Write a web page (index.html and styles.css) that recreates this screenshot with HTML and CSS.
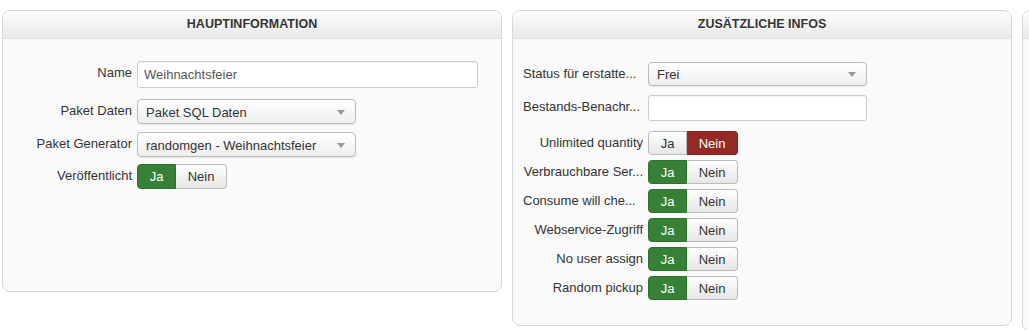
FILE: index.html
```html
<!DOCTYPE html>
<html lang="de">
<head>
    <meta charset="UTF-8">
    <meta name="viewport" content="width=device-width, initial-scale=1.0">
    <title>Paket bearbeiten</title>
    <link rel="stylesheet" href="styles.css">
</head>
<body>
    <div class="panels">
        <!-- Hauptinformation -->
        <div class="panel panel-main">
            <div class="panel-head">Hauptinformation</div>
            <div class="panel-body pb-main">
                <div class="row r-name">
                    <label>Name</label>
                    <input type="text" class="text wide" value="Weihnachtsfeier">
                </div>
                <div class="row r-sel1">
                    <label>Paket Daten</label>
                    <div class="select">Paket SQL Daten</div>
                </div>
                <div class="row r-sel2">
                    <label>Paket Generator</label>
                    <div class="select">randomgen - Weihnachtsfeier</div>
                </div>
                <div class="row r-tog">
                    <label>Veröffentlicht</label>
                    <div class="yesno">
                        <span class="btn yes active">Ja</span><span class="btn no">Nein</span>
                    </div>
                </div>
            </div>
        </div>

        <!-- Zusätzliche Infos -->
        <div class="panel">
            <div class="panel-head">Zusätzliche Infos</div>
            <div class="panel-body pb-extra">
                <div class="row r-status">
                    <label class="left" title="Status für erstattete Pakete">Status für erstatte...</label>
                    <div class="select short">Frei</div>
                </div>
                <div class="row r-stock">
                    <label class="left" title="Bestands-Benachrichtigung">Bestands-Benachr...</label>
                    <input type="text" class="text short" value="">
                </div>
                <div class="row r-small">
                    <label>Unlimited quantity</label>
                    <div class="yesno">
                        <span class="btn yes">Ja</span><span class="btn no active">Nein</span>
                    </div>
                </div>
                <div class="row r-small">
                    <label title="Verbrauchbare Services">Verbrauchbare Ser...</label>
                    <div class="yesno">
                        <span class="btn yes active">Ja</span><span class="btn no">Nein</span>
                    </div>
                </div>
                <div class="row r-small">
                    <label class="left" title="Consume will check">Consume will che...</label>
                    <div class="yesno">
                        <span class="btn yes active">Ja</span><span class="btn no">Nein</span>
                    </div>
                </div>
                <div class="row r-small">
                    <label>Webservice-Zugriff</label>
                    <div class="yesno">
                        <span class="btn yes active">Ja</span><span class="btn no">Nein</span>
                    </div>
                </div>
                <div class="row r-small">
                    <label>No user assign</label>
                    <div class="yesno">
                        <span class="btn yes active">Ja</span><span class="btn no">Nein</span>
                    </div>
                </div>
                <div class="row r-small last">
                    <label>Random pickup</label>
                    <div class="yesno">
                        <span class="btn yes active">Ja</span><span class="btn no">Nein</span>
                    </div>
                </div>
            </div>
        </div>

        <!-- dritte Spalte, abgeschnitten -->
        <div class="panel panel-cut">
            <div class="panel-head">&nbsp;</div>
            <div class="panel-body"></div>
        </div>
    </div>
</body>
</html>
```

FILE: styles.css
```css
body {
    margin: 0;
    padding: 10px 0 0 2px;
    background: #fff;
    font-family: "Liberation Sans", Arial, sans-serif;
    font-size: 13px;
    color: #333;
    overflow: hidden;
}
.panels {
    display: flex;
    align-items: flex-start;
    gap: 10px;
    width: 1600px;
}
.panel {
    width: 498px;
    flex: none;
    border: 1px solid #d8d8d8;
    border-radius: 8px;
    background: #fafafa;
    overflow: hidden;
}
.panel-main {
    min-height: 280px;
}
.panel-cut {
    height: 320px;
}
.panel-head {
    height: 27px;
    line-height: 27px;
    text-align: center;
    text-transform: uppercase;
    font-weight: bold;
    font-size: 12.5px;
    color: #333;
    text-shadow: 0 1px 0 #fff;
    background: linear-gradient(#fdfdfd, #e8e8e8);
    border-bottom: 1px solid #e2e2e2;
}
.pb-main {
    padding: 22px 0 0 9px;
}
.pb-extra {
    padding: 23px 0 25px 10px;
}
.row {
    display: flex;
    align-items: flex-start;
    gap: 5px;
}
.row label {
    width: 120px;
    flex: none;
    text-align: right;
    white-space: nowrap;
    padding-top: 4px;
}
.row label.left {
    text-align: left;
}
.r-name { margin-bottom: 11px; }
.r-sel1 { margin-bottom: 8px; }
.r-sel2 { margin-bottom: 7px; }
.r-status { margin-bottom: 9px; }
.r-stock { margin-bottom: 10px; }
.r-small { margin-bottom: 5px; }
.r-small.last { margin-bottom: 0; }

/* Eingabefelder */
.text {
    box-sizing: border-box;
    height: 27px;
    margin: 0;
    padding: 0 6px;
    border: 1px solid #ccc;
    border-radius: 3px;
    background: #fff;
    font-family: inherit;
    font-size: 13px;
    color: #555;
    box-shadow: inset 0 1px 1px rgba(0, 0, 0, 0.05);
}
.text.wide {
    width: 341px;
}
.text.short {
    width: 219px;
    height: 26px;
}
.select {
    box-sizing: border-box;
    position: relative;
    width: 219px;
    height: 25px;
    line-height: 25px;
    padding-left: 8px;
    border: 1px solid #bbb;
    border-radius: 4px;
    background: linear-gradient(#fff, #eee);
    box-shadow: 0 1px 1px rgba(0, 0, 0, 0.08);
    color: #333;
}
.select.short {
    height: 24px;
    line-height: 24px;
}
.select::after {
    content: "";
    position: absolute;
    right: 10px;
    top: 50%;
    margin-top: -2px;
    border-left: 4px solid transparent;
    border-right: 4px solid transparent;
    border-top: 5px solid #999;
}

/* Ja / Nein Schalter */
.yesno {
    display: flex;
    height: 25px;
}
.r-small .yesno {
    height: 24px;
}
.btn {
    box-sizing: border-box;
    display: flex;
    align-items: center;
    justify-content: center;
    border: 1px solid #bbb;
    background: linear-gradient(#fff, #e6e6e6);
    color: #333;
}
.btn.yes {
    width: 39px;
    border-radius: 4px 0 0 4px;
}
.btn.no {
    width: 51px;
    border-left: none;
    border-radius: 0 4px 4px 0;
}
.btn.yes.active {
    background: #378137;
    border-color: #2f6f2f;
    color: #fff;
}
.btn.no.active {
    background: #942a25;
    border-color: #7f231f;
    color: #fff;
}
```
